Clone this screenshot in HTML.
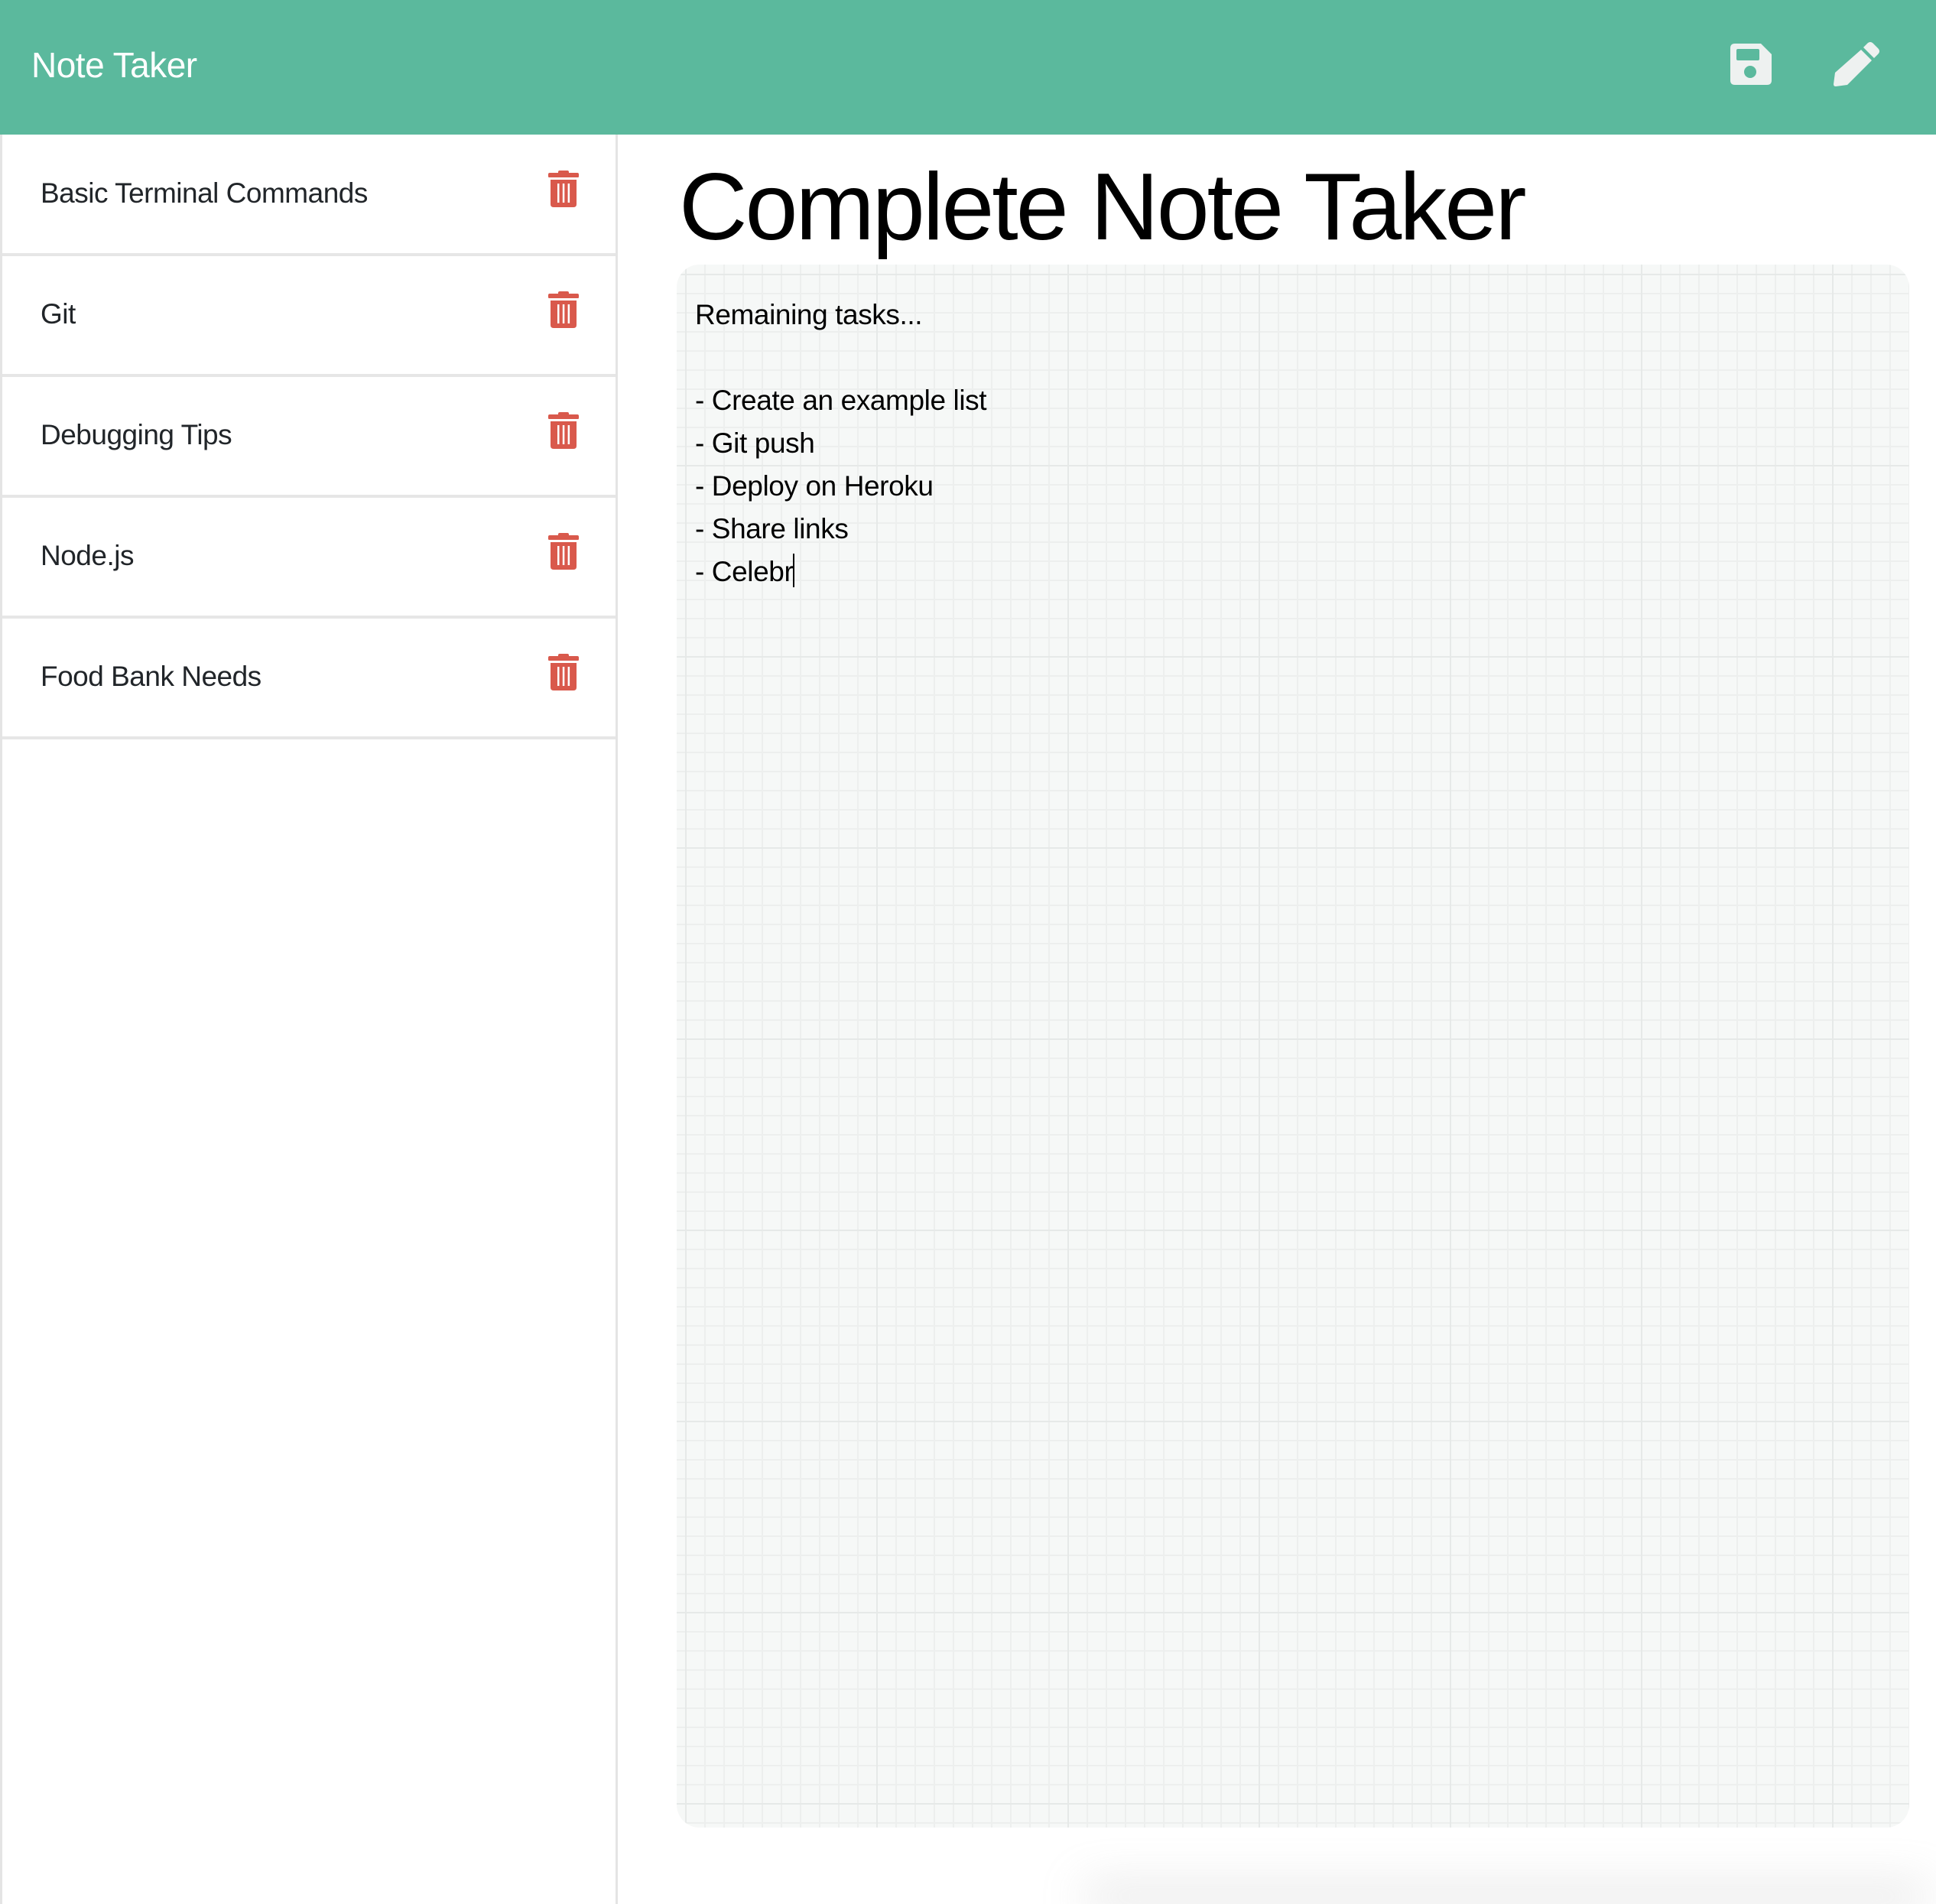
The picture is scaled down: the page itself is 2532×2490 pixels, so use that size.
<!DOCTYPE html>
<html><head><meta charset="utf-8"><style>
html,body{margin:0;padding:0;width:2532px;height:2490px;overflow:hidden;background:#fff;font-family:"Liberation Sans",sans-serif;}
.wrap{position:absolute;left:0;top:0;width:2532px;height:2490px;overflow:hidden;}
.hdr{position:absolute;left:0;top:0;width:2532px;height:176px;background:#5bb99d;}
.hdr .t{position:absolute;left:41px;top:58px;font-size:46px;color:#fff;letter-spacing:-0.5px;}
.side{position:absolute;left:0;top:176px;width:808px;height:2314px;border-left:3px solid #e4e4e4;border-right:3px solid #e4e4e4;box-sizing:border-box;}
.item{position:absolute;left:0;width:802px;height:155px;border-bottom:4px solid #e6e6e6;}
.item span{position:absolute;left:50px;top:56px;font-size:37px;color:#212529;letter-spacing:-0.5px;}
.item svg{position:absolute;left:714px;top:47px;}
h1{position:absolute;left:888px;top:200px;margin:0;font-weight:normal;font-size:124px;color:#000;letter-spacing:-3px;white-space:nowrap;}
.ta{position:absolute;left:885px;top:346px;width:1612px;height:2044px;border-radius:30px;background-color:#f6f8f7;
background-image:linear-gradient(90deg,#e6e9e8 2px,transparent 2px),linear-gradient(0deg,#e6e9e8 2px,transparent 2px),linear-gradient(90deg,#edefee 2px,transparent 2px),linear-gradient(0deg,#edefee 2px,transparent 2px);
background-size:250px 250px,250px 250px,25px 25px,25px 25px;background-position:11px 14px,0 14px,11px 0,0 14px;}
.ta .tx{position:absolute;left:24px;top:38px;font-size:37px;line-height:56px;color:#000;white-space:pre;letter-spacing:-0.4px;}
.cur{display:inline-block;width:2px;height:44px;background:#000;vertical-align:-8px;}
.shadow{position:absolute;left:1420px;top:2470px;width:1100px;height:20px;background:#aaa;filter:blur(30px);opacity:0.5;}
</style></head><body>
<div class="wrap">
<div class="hdr"><div class="t">Note Taker</div>
<svg style="position:absolute;left:2263px;top:57px" width="54" height="54" viewBox="0 0 54 54"><path d="M6 0H40L54 14V48Q54 54 48 54H6Q0 54 0 48V6Q0 0 6 0Z" fill="#eef1f0"/><rect x="8" y="7" width="30" height="15" rx="2" fill="#5bb99d"/><circle cx="26" cy="37" r="8" fill="#5bb99d"/></svg>
<svg style="position:absolute;left:2398px;top:53px" width="62" height="62" viewBox="0 0 62 62"><path d="M44 4Q48 0 52 4L58 10Q62 14 58 18L53 23L39 9Z" fill="#eef1f0"/><path d="M36 12L50 26L18 58L3 60Q0 60 0 57L2 42Z" fill="#eef1f0"/></svg>
</div>
<div class="side">
<div class="item" style="top:0"><span>Basic Terminal Commands</span><svg width="40" height="48" viewBox="0 0 40 48"><path d="M13 2Q13 0 15 0H25Q27 0 27 2V3H38Q40 3 40 5V8Q40 9 38 9H2Q0 9 0 8V5Q0 3 2 3H13Z" fill="#d9594c"/><path d="M3 12H37V44Q37 48 33 48H7Q3 48 3 44Z" fill="#d9594c"/><rect x="12" y="17" width="2.5" height="25" fill="#fff"/><rect x="18.8" y="17" width="2.5" height="25" fill="#fff"/><rect x="25.6" y="17" width="2.5" height="25" fill="#fff"/></svg></div>
<div class="item" style="top:158px"><span>Git</span><svg width="40" height="48" viewBox="0 0 40 48"><path d="M13 2Q13 0 15 0H25Q27 0 27 2V3H38Q40 3 40 5V8Q40 9 38 9H2Q0 9 0 8V5Q0 3 2 3H13Z" fill="#d9594c"/><path d="M3 12H37V44Q37 48 33 48H7Q3 48 3 44Z" fill="#d9594c"/><rect x="12" y="17" width="2.5" height="25" fill="#fff"/><rect x="18.8" y="17" width="2.5" height="25" fill="#fff"/><rect x="25.6" y="17" width="2.5" height="25" fill="#fff"/></svg></div>
<div class="item" style="top:316px"><span>Debugging Tips</span><svg width="40" height="48" viewBox="0 0 40 48"><path d="M13 2Q13 0 15 0H25Q27 0 27 2V3H38Q40 3 40 5V8Q40 9 38 9H2Q0 9 0 8V5Q0 3 2 3H13Z" fill="#d9594c"/><path d="M3 12H37V44Q37 48 33 48H7Q3 48 3 44Z" fill="#d9594c"/><rect x="12" y="17" width="2.5" height="25" fill="#fff"/><rect x="18.8" y="17" width="2.5" height="25" fill="#fff"/><rect x="25.6" y="17" width="2.5" height="25" fill="#fff"/></svg></div>
<div class="item" style="top:474px"><span>Node.js</span><svg width="40" height="48" viewBox="0 0 40 48"><path d="M13 2Q13 0 15 0H25Q27 0 27 2V3H38Q40 3 40 5V8Q40 9 38 9H2Q0 9 0 8V5Q0 3 2 3H13Z" fill="#d9594c"/><path d="M3 12H37V44Q37 48 33 48H7Q3 48 3 44Z" fill="#d9594c"/><rect x="12" y="17" width="2.5" height="25" fill="#fff"/><rect x="18.8" y="17" width="2.5" height="25" fill="#fff"/><rect x="25.6" y="17" width="2.5" height="25" fill="#fff"/></svg></div>
<div class="item" style="top:632px"><span>Food Bank Needs</span><svg width="40" height="48" viewBox="0 0 40 48"><path d="M13 2Q13 0 15 0H25Q27 0 27 2V3H38Q40 3 40 5V8Q40 9 38 9H2Q0 9 0 8V5Q0 3 2 3H13Z" fill="#d9594c"/><path d="M3 12H37V44Q37 48 33 48H7Q3 48 3 44Z" fill="#d9594c"/><rect x="12" y="17" width="2.5" height="25" fill="#fff"/><rect x="18.8" y="17" width="2.5" height="25" fill="#fff"/><rect x="25.6" y="17" width="2.5" height="25" fill="#fff"/></svg></div>
</div>
<h1>Complete Note Taker</h1>
<div class="ta"><div class="tx">Remaining tasks...

- Create an example list
- Git push
- Deploy on Heroku
- Share links
- Celebr<span class="cur"></span></div></div>
<div class="shadow"></div>
</div>
</body></html>
